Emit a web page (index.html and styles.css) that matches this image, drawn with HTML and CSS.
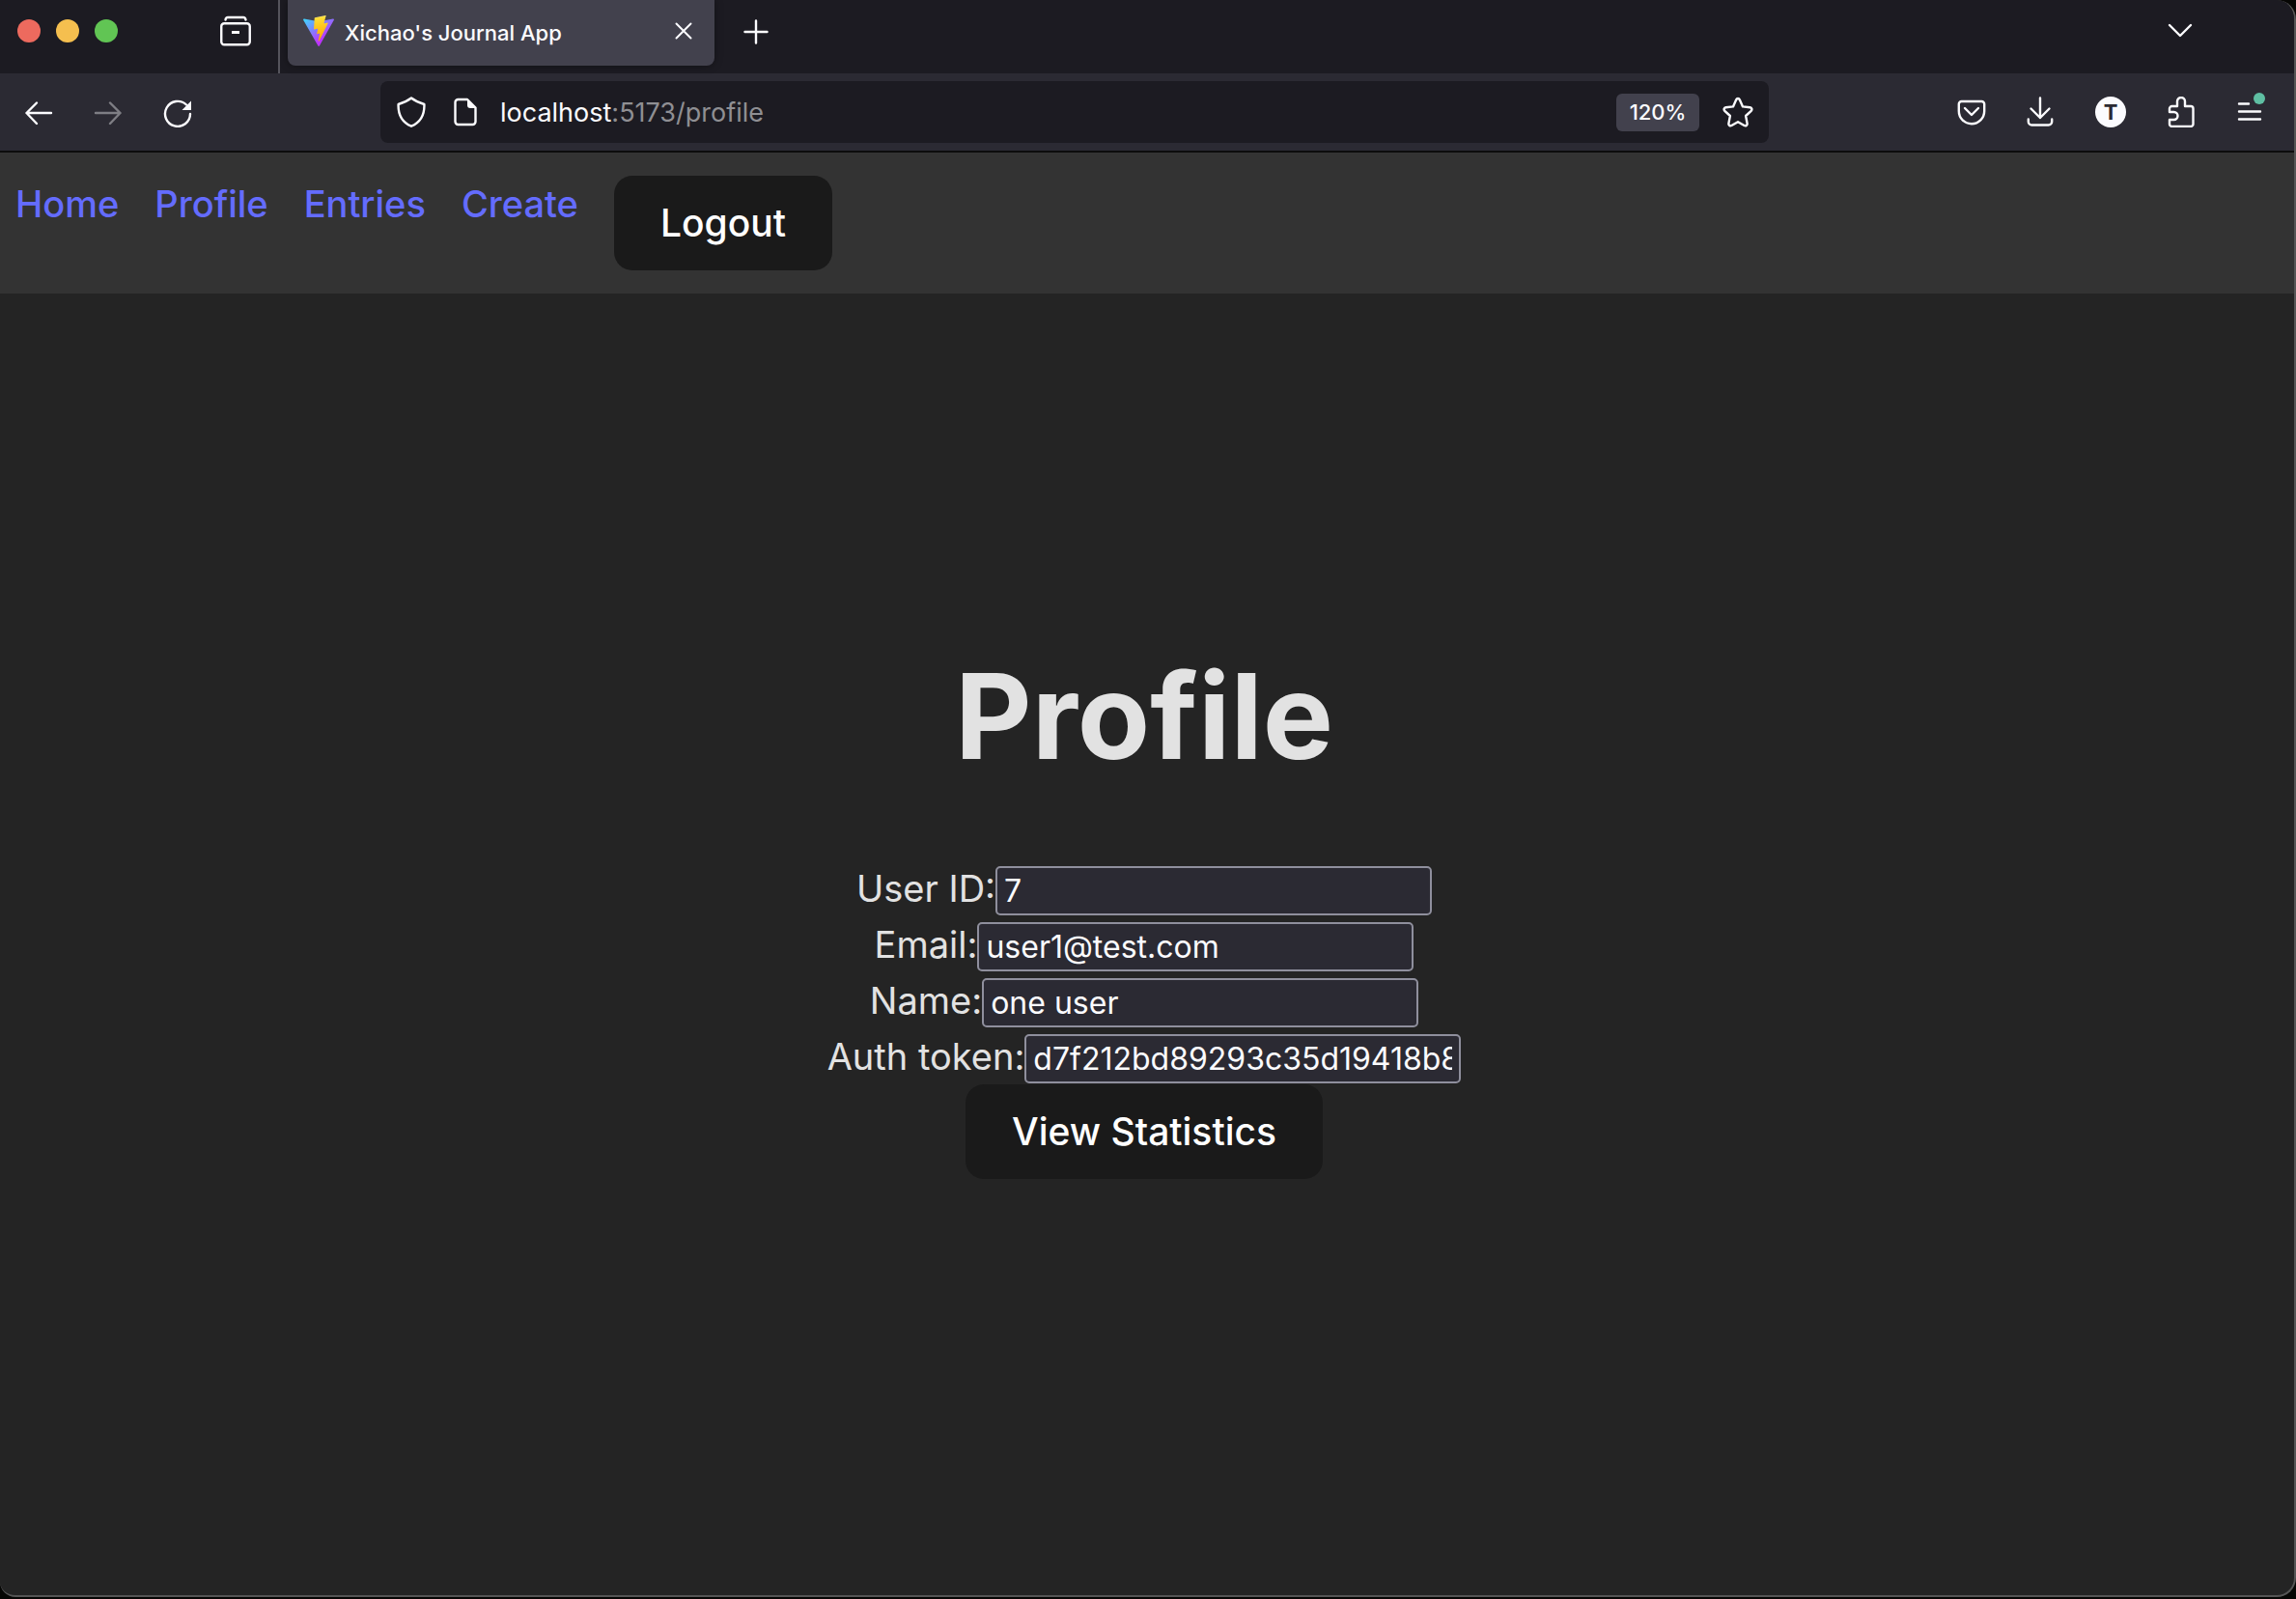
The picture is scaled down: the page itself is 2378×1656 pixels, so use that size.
FILE: index.html
```html
<!DOCTYPE html>
<html lang="en">
<head>
<meta charset="utf-8">
<meta name="viewport" content="width=device-width, initial-scale=1">
<title>Xichao's Journal App</title>
<link rel="stylesheet" href="styles.css">
</head>
<body>
<div class="window">
  <div class="tabstrip">
    <div class="lights">
      <button class="light light-close" aria-label="Close window"></button>
      <button class="light light-min" aria-label="Minimize window"></button>
      <button class="light light-max" aria-label="Zoom window"></button>
    </div>
    <button class="icon-btn view-btn" aria-label="Firefox View">
      <svg viewBox="0 0 32 32" class="icon"><path d="M5.5 4.5C5.8 2.500 6.500 2 8 2h16c1.500 0 2.200.5 2.500 2.500" /><rect x="1.250" y="8.250" width="29.500" height="22" rx="3"/><path d="M12 17.500h8" stroke-width="3" stroke-linecap="butt"/></svg>
    </button>
    <div class="tab">
      <svg viewBox="0 0 256 257" class="favicon">
        <defs>
          <linearGradient id="shell" x1="-.828%" x2="57.636%" y1="7.652%" y2="78.411%"><stop offset="0%" stop-color="#41D1FF"/><stop offset="100%" stop-color="#BD34FE"/></linearGradient>
          <linearGradient id="bolt" x1="43.376%" x2="50.316%" y1="2.242%" y2="89.03%"><stop offset="0%" stop-color="#FFEA83"/><stop offset="8.333%" stop-color="#FFDD35"/><stop offset="100%" stop-color="#FFA800"/></linearGradient>
        </defs>
        <path fill="url(#shell)" d="M255.153 37.938 134.897 252.976c-2.483 4.44-8.862 4.466-11.382.048L.875 37.958c-2.746-4.814 1.371-10.646 6.827-9.67l120.385 21.517a6.537 6.537 0 0 0 2.322-.004l117.867-21.483c5.438-.991 9.574 4.796 6.877 9.62Z"/>
        <path fill="url(#bolt)" d="M185.432.063 96.44 17.501a3.268 3.268 0 0 0-2.634 3.014l-5.474 92.456a3.268 3.268 0 0 0 3.997 3.378l24.777-5.718c2.318-.535 4.413 1.507 3.936 3.838l-7.361 36.047c-.495 2.426 1.782 4.5 4.151 3.78l15.304-4.649c2.372-.72 4.652 1.36 4.15 3.788l-11.698 56.621c-.732 3.542 3.979 5.473 5.943 2.437l1.313-2.028 72.516-144.72c1.215-2.423-.88-5.186-3.54-4.672l-25.505 4.922c-2.396.462-4.435-1.77-3.759-4.114l16.646-57.705c.677-2.35-1.37-4.583-3.769-4.113Z"/>
      </svg>
      <span class="tab-title">Xichao's Journal App</span>
      <button class="icon-btn" aria-label="Close tab"><svg viewBox="0 0 32 32" class="icon thin"><path d="M8.500 6.500l15 15M23.500 6.500l-15 15"/></svg></button>
    </div>
    <button class="icon-btn new-tab" aria-label="New tab"><svg viewBox="0 0 32 32" class="icon"><path d="M16 5.500v23M4.500 17h23"/></svg></button>
    <button class="icon-btn list-tabs" aria-label="List all tabs"><svg viewBox="0 0 32 32" class="icon"><path d="M5 10l11 11 11-11"/></svg></button>
  </div>

  <div class="toolbar">
    <div class="history">
      <button class="icon-btn" aria-label="Back"><svg viewBox="0 0 32 32" class="icon"><path d="M29 17H3.500M14 6.500L3.500 17 14 28"/></svg></button>
      <button class="icon-btn faded" aria-label="Forward"><svg viewBox="0 0 32 32" class="icon"><path d="M3 17h25.500M18 6.500L28.500 17 18 28"/></svg></button>
      <button class="icon-btn" aria-label="Reload"><svg viewBox="0 0 32 32" class="icon"><path d="M29 18A13 13 0 1 1 25 8.500"/><path class="solid" d="M30 4.500v9.500h-9.500z" stroke="none"/></svg></button>
    </div>
    <div class="urlbar">
      <svg viewBox="0 0 32 32" class="icon"><path d="M16 1.500c4.300 3.300 8.500 5 13.400 6.500C29.800 18 26 26.500 16 30.700 6 26.500 2.200 18 2.600 8 7.500 6.500 11.700 4.800 16 1.500z"/></svg>
      <svg viewBox="0 0 32 32" class="icon"><path d="M18 3H8.500a3 3 0 0 0-3 3v20a3 3 0 0 0 3 3h15a3 3 0 0 0 3-3V11.500z"/><path class="solid" d="M18 2.500v6.500a3 3 0 0 0 3 3h6.500z" stroke="none"/></svg>
      <div class="url" role="textbox" aria-label="Address">localhost<span class="url-rest">:5173/profile</span></div>
      <button class="zoom-badge">120%</button>
      <button class="icon-btn" aria-label="Bookmark this page"><svg viewBox="0 0 32 32" class="icon"><path d="M14.200 3.200c.7-1.600 2.900-1.600 3.600 0l3.200 7.200 7.600.9c1.800.2 2.400 2.300 1.100 3.500l-5.600 5.200 1.500 7.900c.3 1.700-1.500 2.900-3 2.100L16 26.200 9.400 30c-1.500.8-3.300-.4-3-2.100l1.500-7.900-5.600-5.200C1 13.600 1.600 11.500 3.400 11.300l7.600-.9z"/></svg></button>
    </div>
    <div class="actions">
      <button class="icon-btn" aria-label="Save to Pocket"><svg viewBox="0 0 32 32" class="icon"><path d="M5.500 5h21a2.700 2.700 0 0 1 2.700 2.700V15a13.200 13.200 0 0 1-26.400 0V7.700A2.700 2.700 0 0 1 5.500 5z"/><path d="M9 12l7 7 7-7"/></svg></button>
      <button class="icon-btn" aria-label="Downloads"><svg viewBox="0 0 32 32" class="icon"><path d="M15 1.500V22M5.500 12.500L15 22l9.500-9.500M2.800 23.500V26a3.500 3.500 0 0 0 3.500 3.500h17.400a3.500 3.500 0 0 0 3.500-3.500v-2.500"/></svg></button>
      <button class="avatar" aria-label="Account">T</button>
      <button class="icon-btn" aria-label="Extensions"><svg viewBox="0 0 32 32" class="icon"><path d="M5 16V12.500a2.500 2.500 0 0 1 2.500-2.500H13V5a4 4 0 0 1 8 0v5h6a2.500 2.500 0 0 1 2.500 2.500v16a2.500 2.500 0 0 1-2.500 2.500H7.500A2.500 2.500 0 0 1 5 28.500V24h4.500a4 4 0 0 0 0-8z"/></svg></button>
      <button class="icon-btn menu-btn" aria-label="Application menu"><svg viewBox="0 0 32 32" class="icon"><path d="M5 7.500h10M5 15.500h22M5 23.500h22"/></svg><span class="dot"></span></button>
    </div>
  </div>

  <nav class="nav">
    <a href="#home">Home</a>
    <a href="#profile">Profile</a>
    <a href="#entries">Entries</a>
    <a href="#create">Create</a>
    <button class="btn">Logout</button>
  </nav>

  <main class="main">
    <h1>Profile</h1>
    <div class="row"><label for="uid">User ID:</label><input class="field" id="uid" type="text" value="7" readonly></div>
    <div class="row"><label for="email">Email:</label><input class="field" id="email" type="text" value="user1@test.com" readonly></div>
    <div class="row"><label for="name">Name:</label><input class="field" id="name" type="text" value="one user" readonly></div>
    <div class="row"><label for="token">Auth token:</label><input class="field" id="token" type="text" value="d7f212bd89293c35d19418b8e6" readonly></div>
    <button class="btn">View Statistics</button>
  </main>
</div>
</body>
</html>
```
FILE: styles.css
```css
* { box-sizing: border-box; }

body {
  margin: 0;
  background: #060604;
  color: #fbfbfe;
  font-family: Inter, "Liberation Sans", sans-serif;
}

button {
  border: 0;
  padding: 0;
  background: none;
  color: inherit;
  font-family: inherit;
}

.window {
  display: flex;
  flex-direction: column;
  min-height: calc(100vh - 2px);
  border-right: 2px solid #555;
  border-bottom: 2px solid #555;
  border-radius: 0 20px 20px 16px;
  background: #242424;
  overflow: hidden;
}

.icon {
  display: block;
  width: 32px;
  height: 32px;
  flex: none;
  fill: none;
  stroke: #fbfbfe;
  stroke-width: 2.4;
  stroke-linecap: round;
  stroke-linejoin: round;
}
.icon.thin { stroke-width: 2; }
.solid { fill: #fbfbfe; }
.icon-btn { flex: none; width: 32px; height: 32px; }
.faded { opacity: .4; }

/* Tab strip */
.tabstrip {
  display: flex;
  align-items: center;
  height: 76px;
  padding-bottom: 12px;
  background: #1c1b22;
}
.lights { display: flex; gap: 16px; padding-left: 18px; }
.light { width: 24px; height: 24px; border-radius: 50%; }
.light-close { background: #ed6a5e; }
.light-min { background: #f5bf4f; }
.light-max { background: #61c554; }
.view-btn { margin-left: 106px; }
.tab {
  position: relative;
  display: flex;
  align-items: center;
  align-self: flex-start;
  width: 442px;
  height: 68px;
  margin-left: 38px;
  padding: 0 16px;
  border-radius: 0 0 8px 8px;
  background: #42414d;
  box-shadow: 0 0 8px #0006;
}
.tab::before {
  content: "";
  position: absolute;
  left: -10px;
  top: 0;
  width: 2px;
  height: 76px;
  background: #55545c;
}
.favicon { width: 32px; height: 32px; flex: none; margin-bottom: 4px; }
.tab-title { flex: 1; margin-left: 11px; font-size: 22px; font-weight: 500; white-space: nowrap; }
.new-tab { margin-left: 27px; }
.list-tabs { margin-left: auto; margin-right: 102px; }

/* Navigation toolbar */
.toolbar {
  display: flex;
  align-items: center;
  height: 82px;
  padding: 0 30px 0 24px;
  border-bottom: 2px solid #0c0c0d;
  background: #2b2a33;
}
.history { display: flex; gap: 40px; margin-right: 194px; }
.urlbar {
  display: flex;
  flex: 1;
  align-items: center;
  gap: 24px;
  height: 64px;
  padding: 0 16px;
  border-radius: 8px;
  background: #1c1b22;
}
.url { flex: 1; margin-left: -4px; font-size: 27px; white-space: nowrap; }
.url-rest { color: #8f8f93; }
.zoom-badge {
  width: 86px;
  height: 39px;
  border-radius: 6px;
  background: #42414d;
  font-size: 22px;
  font-weight: 500;
}
.actions { display: flex; gap: 40px; margin-left: 194px; }
.avatar {
  width: 32px;
  height: 32px;
  border-radius: 50%;
  background: #fbfbfe;
  color: #2b2a33;
  font-size: 22px;
  font-weight: 700;
}
.menu-btn { position: relative; }
.dot {
  position: absolute;
  top: -4px;
  right: 0;
  width: 12px;
  height: 12px;
  border-radius: 50%;
  background: #5fbfa3;
}

/* Journal page */
.nav {
  display: flex;
  align-items: flex-start;
  gap: 37px;
  padding: 24px 16px;
  background: #333;
  font-size: 38px;
  line-height: 58px;
}
.nav a { color: #646cff; font-weight: 500; text-decoration: none; }
.btn {
  padding: 23px 46px;
  border: 2px solid transparent;
  border-radius: 19px;
  background: #1a1a1a;
  color: #fff;
  font-size: 39px;
  font-weight: 500;
  line-height: 48px;
}

.main {
  display: flex;
  flex: 1;
  flex-direction: column;
  align-items: center;
  justify-content: center;
  padding: 0 6px 144px 0;
  color: #e2e2e2;
  font-size: 38px;
  line-height: 58px;
}
h1 { margin: 82px 0; font-size: 123px; line-height: 135px; font-weight: 700; }
.main .btn { flex: none; }
.row { display: flex; align-items: baseline; height: 58px; }
.field {
  width: 452px;
  height: 51px;
  padding: 2px 7px;
  border: 2px solid #8f8f9d;
  border-radius: 5px;
  background: #2b2a33;
  color: #fbfbfe;
  font-family: inherit;
  font-size: 32px;
}
```
